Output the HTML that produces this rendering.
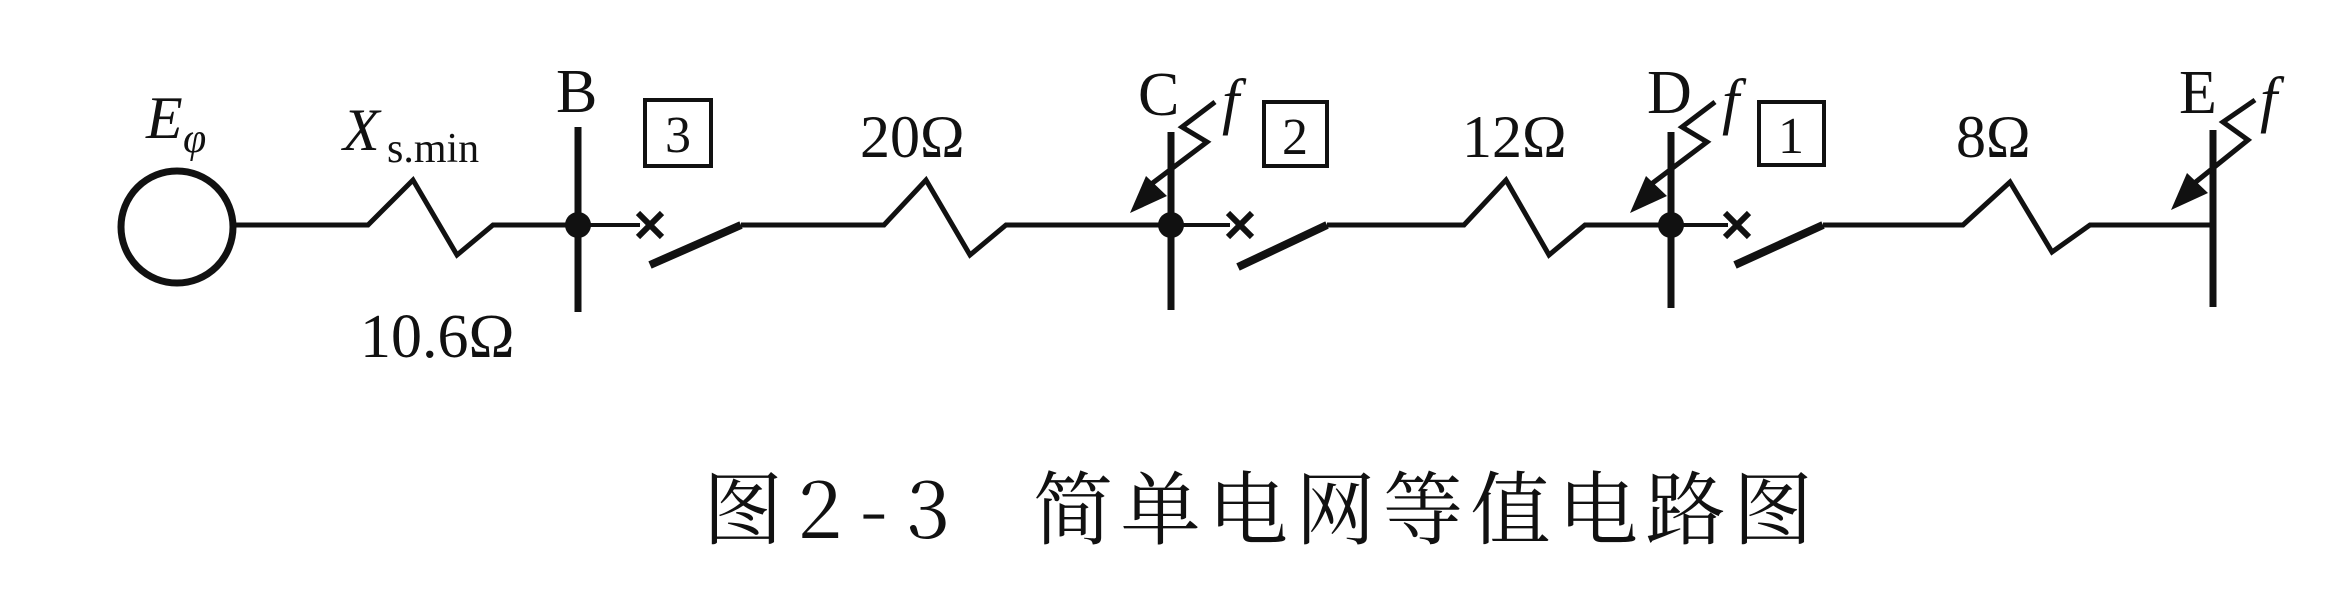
<!DOCTYPE html>
<html><head><meta charset="utf-8"><style>
html,body{margin:0;padding:0;background:#fff;width:2344px;height:608px;overflow:hidden}
svg{display:block}
text{font-family:"Liberation Serif","Noto Serif CJK SC",serif;fill:#111}
.i{font-style:italic}
</style></head><body>
<svg width="2344" height="608" viewBox="0 0 2344 608" xmlns="http://www.w3.org/2000/svg">
<g stroke="#111" fill="none" stroke-linejoin="miter" stroke-linecap="butt">
<circle cx="177" cy="227" r="56" stroke-width="7"/>
<path d="M233 225 H368 L413 180 L457 255 L493 225 H578" stroke-width="5"/>
<path d="M578 225 H640" stroke-width="4"/>
<path d="M741 225 H884 L926 180 L970 255 L1006 225 H1171" stroke-width="5"/>
<path d="M1171 225 H1230" stroke-width="4"/>
<path d="M1327 225 H1464 L1506 180 L1549 255 L1585 225 H1671" stroke-width="5"/>
<path d="M1671 225 H1728" stroke-width="4"/>
<path d="M1823 225 H1963 L2010 182 L2052 252 L2090 225 H2213" stroke-width="5"/>
<path d="M578 127 V312 M1171 132 V310 M1671 132 V308 M2213 130 V307" stroke-width="7"/>
<path d="M638 213 L662 237 M662 213 L638 237" stroke-width="6"/>
<path d="M1228 213 L1252 237 M1252 213 L1228 237" stroke-width="6"/>
<path d="M1725 213 L1749 237 M1749 213 L1725 237" stroke-width="6"/>
<path d="M650 265 L741 225" stroke-width="8"/>
<path d="M1238 267 L1327 225" stroke-width="8"/>
<path d="M1735 265 L1823 225" stroke-width="8"/>
<rect x="645" y="100" width="66" height="66" stroke-width="4"/>
<rect x="1264" y="102" width="63" height="64" stroke-width="4"/>
<rect x="1759" y="102" width="65" height="63" stroke-width="4"/>
<path d="M1215 102 L1182 127 L1207 142 L1150 185" stroke-width="5"/>
<path d="M1715 102 L1682 127 L1707 142 L1650 185" stroke-width="5"/>
<path d="M2255 100 L2223 122 L2248 140 L2192 185" stroke-width="5"/>
</g>
<g fill="#111">
<circle cx="578" cy="225" r="13"/>
<circle cx="1171" cy="225" r="13"/>
<circle cx="1671" cy="225" r="13"/>
<polygon points="1130,213 1146,176 1167,196"/>
<polygon points="1630,213 1646,176 1667,196"/>
<polygon points="2171,210 2187,173 2208,193"/>
</g>
<text x="146" y="138" font-size="60" class="i">E</text>
<text x="183" y="152" font-size="42" class="i">φ</text>
<text x="343" y="150" font-size="60" class="i">X</text>
<text x="387" y="162" font-size="42">s.min</text>
<text x="556" y="112" font-size="62">B</text>
<text x="1138" y="115" font-size="62">C</text>
<text x="1647" y="113" font-size="62">D</text>
<text x="2179" y="113" font-size="62">E</text>
<text x="1222" y="122" font-size="62" class="i">f</text>
<text x="1722" y="122" font-size="62" class="i">f</text>
<text x="2260" y="120" font-size="62" class="i">f</text>
<text x="678" y="152" font-size="52" text-anchor="middle">3</text>
<text x="1295" y="154" font-size="52" text-anchor="middle">2</text>
<text x="1791" y="153" font-size="52" text-anchor="middle">1</text>
<text x="860" y="157" font-size="60">20Ω</text>
<text x="1462" y="157" font-size="60">12Ω</text>
<text x="1956" y="157" font-size="60">8Ω</text>
<text x="360" y="357" font-size="62">10.6Ω</text>
<g font-size="80">
<text x="703" y="538" style='font-family:"Noto Serif CJK SC",serif'>图</text>
<text x="798" y="538" style='font-family:"Noto Serif CJK SC",serif'>2</text>
<text x="860" y="538" style='font-family:"Noto Serif CJK SC",serif'>-</text>
<text x="906" y="538" style='font-family:"Noto Serif CJK SC",serif'>3</text>
<text x="1033" y="538" letter-spacing="7.5" style='font-family:"Noto Serif CJK SC",serif'>简单电网等值电路图</text>
</g>
</svg>
</body></html>
